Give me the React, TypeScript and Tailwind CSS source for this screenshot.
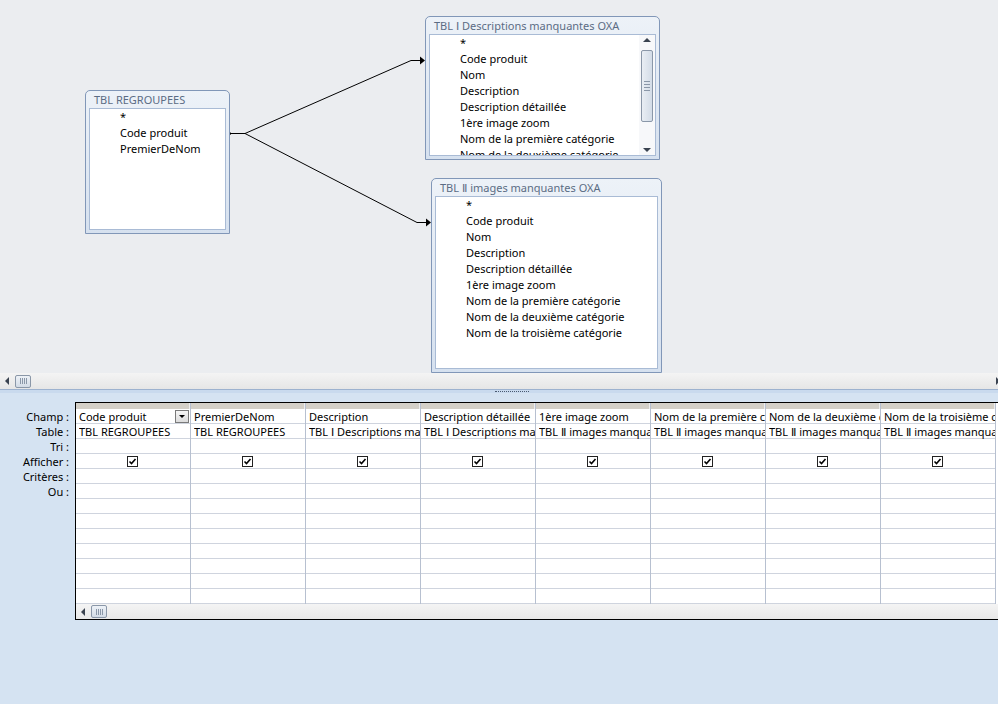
import React from 'react';

const font = { fontFamily: '"Noto Sans", "DejaVu Sans", sans-serif' };

interface TableBoxProps {
  title: string;
  fields: string[];
  className: string;
  scroll?: boolean;
}

const TableBox = ({ title, fields, className, scroll }: TableBoxProps) => (
  <div
    className={`absolute flex flex-col rounded-t-[5px] border border-[#8197b8] bg-gradient-to-b from-[#edf2f8] to-[#d6e1ef] px-[3px] pb-[3px] ${className}`}
  >
    <div className="h-[17px] shrink-0 truncate pl-[5px] text-[11px] leading-[17px] text-[#5b6c84]">
      {title}
    </div>
    <div className="flex min-h-0 flex-1 border border-[#a9bbd5] bg-white">
      <div className="min-w-0 flex-1 overflow-hidden">
        {fields.map((f) => (
          <div
            key={f}
            className="h-[16px] whitespace-nowrap pl-[30px] text-[11px] leading-[16px] text-black"
          >
            {f}
          </div>
        ))}
      </div>
      {scroll && (
        <div className="flex w-[16px] shrink-0 flex-col items-center bg-[#f7f8fa] py-[3px]">
          <div className="h-0 w-0 border-x-[4px] border-b-[4px] border-x-transparent border-b-[#3a4350]" />
          <div className="mt-[8px] flex h-[72px] w-[12px] flex-col items-center justify-center gap-[2px] rounded-[2px] border border-[#8a97a8] bg-gradient-to-r from-[#e9eef4] to-[#d3dce7]">
            <div className="h-px w-[6px] bg-[#8a97a8]" />
            <div className="h-px w-[6px] bg-[#8a97a8]" />
            <div className="h-px w-[6px] bg-[#8a97a8]" />
            <div className="h-px w-[6px] bg-[#8a97a8]" />
          </div>
          <div className="flex-1" />
          <div className="h-0 w-0 border-x-[4px] border-t-[4px] border-x-transparent border-t-[#3a4350]" />
        </div>
      )}
    </div>
  </div>
);

const fieldsFull = [
  '*',
  'Code produit',
  'Nom',
  'Description',
  'Description détaillée',
  '1ère image zoom',
  'Nom de la première catégorie',
  'Nom de la deuxième catégorie',
  'Nom de la troisième catégorie',
];

const columns = [
  { champ: 'Code produit', table: 'TBL REGROUPEES' },
  { champ: 'PremierDeNom', table: 'TBL REGROUPEES' },
  { champ: 'Description', table: 'TBL Ⅰ Descriptions manquantes OXA' },
  { champ: 'Description détaillée', table: 'TBL Ⅰ Descriptions manquantes OXA' },
  { champ: '1ère image zoom', table: 'TBL Ⅱ images manquantes OXA' },
  { champ: 'Nom de la première catégorie', table: 'TBL Ⅱ images manquantes OXA' },
  { champ: 'Nom de la deuxième catégorie', table: 'TBL Ⅱ images manquantes OXA' },
  { champ: 'Nom de la troisième catégorie', table: 'TBL Ⅱ images manquantes OXA' },
];

const labels = ['Champ :', 'Table :', 'Tri :', 'Afficher :', 'Critères :', 'Ou :'];

const Checkbox = () => (
  <div className="flex h-[11px] w-[11px] items-center justify-center border border-[#222] bg-white">
    <svg width="9" height="9" viewBox="0 0 9 9">
      <path d="M1.5 4.5 L3.5 6.5 L7.5 2" stroke="#000" strokeWidth="1.6" fill="none" />
    </svg>
  </div>
);

const Thumb = () => (
  <div className="flex h-[13px] w-[16px] items-center justify-center gap-px rounded-[2px] border border-[#8a97a8] bg-gradient-to-b from-[#eef2f7] to-[#d2dbe6]">
    <div className="h-[6px] w-px bg-[#8a97a8]" />
    <div className="h-[6px] w-px bg-[#8a97a8]" />
    <div className="h-[6px] w-px bg-[#8a97a8]" />
    <div className="h-[6px] w-px bg-[#8a97a8]" />
  </div>
);

// clipped cell text, like the Access query grid
const Cell = ({ text }: { text: string }) => (
  <span className="block w-[111px] overflow-hidden whitespace-nowrap">{text}</span>
);

export default function App() {
  return (
    <div className="flex h-[704px] w-[998px] flex-col overflow-hidden bg-[#d5e3f2]" style={font}>
      {/* diagram canvas */}
      <div className="relative h-[373px] shrink-0 bg-[#ebedf0]">
        <svg className="absolute left-0 top-0" width="998" height="373">
          <circle cx="229.5" cy="133.5" r="1.5" fill="#000" />
          <path d="M229 133.5 H245 L411 60.5 H421" stroke="#000" strokeWidth="1" fill="none" />
          <path d="M245 133.5 L417 222.5 H427" stroke="#000" strokeWidth="1" fill="none" />
          <polygon points="420,56.5 425,60.5 420,64.5" fill="#000" />
          <polygon points="426,218.5 431,222.5 426,226.5" fill="#000" />
        </svg>
        <TableBox
          title="TBL REGROUPEES"
          fields={['*', 'Code produit', 'PremierDeNom']}
          className="left-[85px] top-[90px] h-[144px] w-[145px]"
        />
        <TableBox
          title="TBL Ⅰ Descriptions manquantes OXA"
          fields={fieldsFull}
          className="left-[425px] top-[16px] h-[144px] w-[235px]"
          scroll
        />
        <TableBox
          title="TBL Ⅱ images manquantes OXA"
          fields={fieldsFull}
          className="left-[431px] top-[178px] h-[195px] w-[231px]"
        />
      </div>

      {/* canvas scrollbar */}
      <div className="flex h-[16px] shrink-0 items-center bg-gradient-to-b from-[#f4f4f4] to-[#e6e6e6]">
        <div className="ml-[5px] h-0 w-0 border-y-[4px] border-r-[4px] border-y-transparent border-r-[#3a4350]" />
        <div className="ml-[6px]">
          <Thumb />
        </div>
        <div className="flex-1" />
        <div className="mr-[-2px] h-0 w-0 border-y-[4px] border-l-[4px] border-y-transparent border-l-[#3a4350]" />
      </div>

      {/* splitter */}
      <div className="flex h-[4px] shrink-0 border-t border-[#9db2cf] bg-[#c9daee] pl-[495px]">
        <div className="mt-px h-px w-[34px] border-t border-dotted border-[#4a5a70]" />
      </div>

      {/* design grid */}
      <div className="flex pt-[9px]">
        <div className="w-[75px] shrink-0 pt-[7px]">
          {labels.map((l) => (
            <div key={l} className="h-[15px] pr-[6px] text-right text-[11px] leading-[15px] text-black">
              {l}
            </div>
          ))}
        </div>
        <div className="flex min-w-0 flex-1 flex-col border-y border-l border-black bg-white">
          <div className="flex">
            {columns.map((c, i) => (
              <div key={i} className="w-[115px] shrink-0 border-r border-[#b7c0d0]">
                <div className="h-[6px] border-r border-[#eeeeee] bg-[#d4d0c8]" />
                <div className="relative h-[15px] border-b border-[#cfd4de] pl-[3px] text-[11px] leading-[15px] text-black">
                  <Cell text={c.champ} />
                  {i === 0 && (
                    <div className="absolute right-[1px] top-px flex h-[13px] w-[14px] items-center justify-center border border-[#7a7a7a] bg-gradient-to-b from-[#f6f6f6] to-[#dcdcdc]">
                      <div className="h-0 w-0 border-x-[3px] border-t-[3px] border-x-transparent border-t-black" />
                    </div>
                  )}
                </div>
                <div className="h-[15px] border-b border-[#cfd4de] pl-[3px] text-[11px] leading-[15px] text-black">
                  <Cell text={c.table} />
                </div>
                <div className="h-[15px] border-b border-[#cfd4de]" />
                <div className="flex h-[15px] items-center justify-center border-b border-[#cfd4de] pr-[2px]">
                  <Checkbox />
                </div>
                {Array.from({ length: 9 }).map((_, r) => (
                  <div key={r} className="h-[15px] border-b border-[#cfd4de]" />
                ))}
              </div>
            ))}
          </div>
          <div className="flex h-[15px] items-center bg-gradient-to-b from-[#f4f4f4] to-[#e8e8e8]">
            <div className="ml-[5px] h-0 w-0 border-y-[4px] border-r-[4px] border-y-transparent border-r-[#3a4350]" />
            <div className="ml-[6px]">
              <Thumb />
            </div>
          </div>
        </div>
      </div>
    </div>
  );
}
